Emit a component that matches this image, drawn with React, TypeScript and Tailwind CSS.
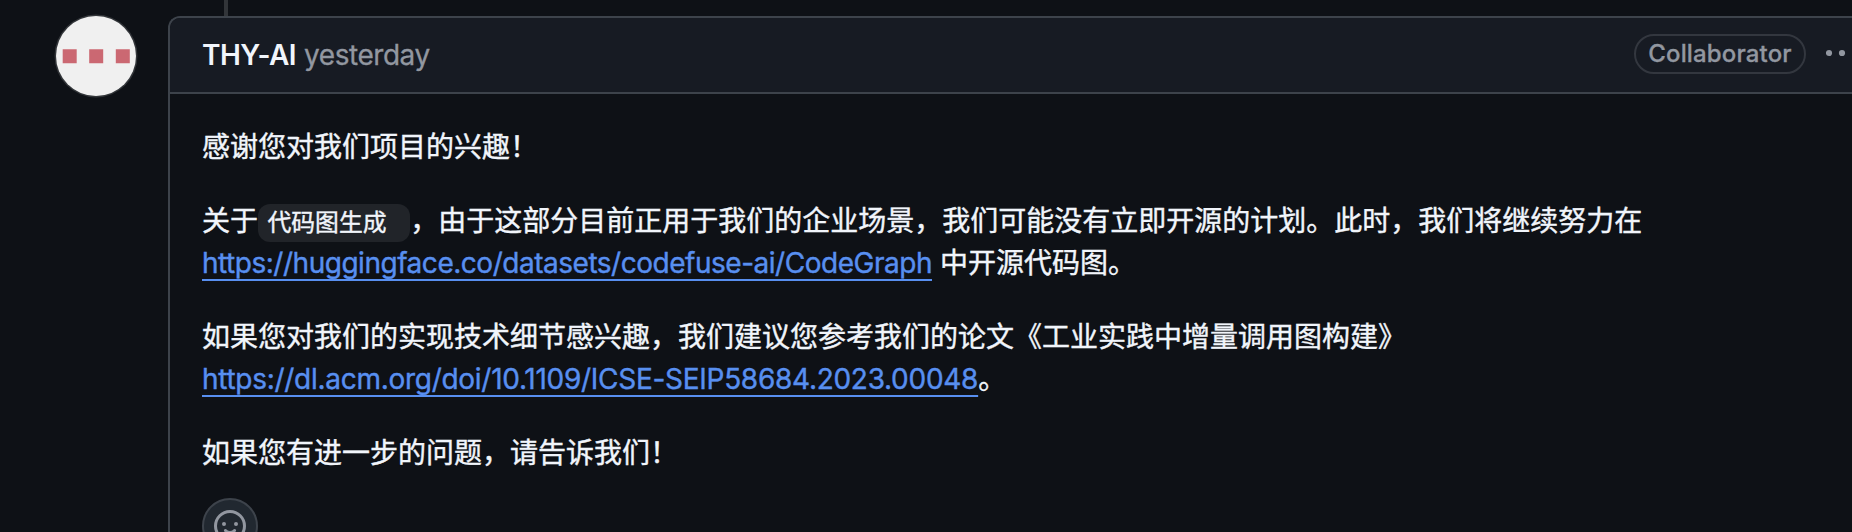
function Avatar() {
  return (
    <svg className="mt-[14px] size-[84px] shrink-0" viewBox="0 0 84 84" aria-hidden="true">
      <circle cx="42" cy="42" r="41.5" fill="#323539" />
      <circle cx="42" cy="42" r="40" fill="#f0f0f0" />
      <path fill="#cb6872" d="M8.7 35.2h14v14h-14zM35.2 35.2h14v14h-14zM61.8 35.2h14v14h-14z" />
    </svg>
  );
}

function Header() {
  return (
    <header className="flex h-[76px] shrink-0 items-center border-b-2 border-[#3d434b] bg-[#171b23] pb-[2px] pl-8">
      <span className="pt-[2px] text-[28px] font-semibold leading-[42px] tracking-[-0.6px] text-[#f1f5fb]">THY-AI</span>
      <span className="ml-2 pt-[2px] text-[28px] leading-[42px] tracking-[-0.45px] text-[#9297a0] [-webkit-text-stroke:0.3px]">yesterday</span>
      <span className="ml-auto flex h-10 w-[172px] items-center justify-center rounded-full border-2 border-[#33373f] text-2xl font-medium leading-none tracking-[0.15px] text-[#9297a0] [-webkit-text-stroke:0.3px]">
        Collaborator
      </span>
      <svg className="mb-[2px] ml-5 size-8 shrink-0" viewBox="0 0 16 16" fill="#9297a0" aria-hidden="true">
        <circle cx="1.5" cy="8" r="1.55" />
        <circle cx="8" cy="8" r="1.55" />
        <circle cx="14.5" cy="8" r="1.5" />
      </svg>
    </header>
  );
}

const link =
  "text-[#588ff0] underline decoration-2 underline-offset-[6px] [text-decoration-skip-ink:none]";

export default function App() {
  return (
    <div lang="zh-CN" className="flex h-[532px] w-[1852px] overflow-hidden bg-[#0e1116] pl-[54px] text-[#f1f5fb] font-[Inter,'Noto_Sans_CJK_SC',sans-serif]">
      <Avatar />
      <div className="ml-[30px] flex w-[1690px] shrink-0 flex-col">
        <div className="ml-14 h-4 w-1 shrink-0 bg-[#323539]" />
        <article className="flex h-[600px] shrink-0 flex-col overflow-hidden rounded-tl-xl border-l-2 border-t-2 border-[#3d434b]">
          <Header />
          <div className="flex flex-col gap-8 whitespace-nowrap pl-8 pt-8 text-[28px] leading-[42px] [-webkit-text-stroke:0.4px]">
            <p className="h-[42px]">感谢您对我们项目的兴趣！</p>
            <p className="h-[84px]">
              关于
              <code className="whitespace-break-spaces rounded-xl bg-[#212429] px-[9.5px] pb-[4px] pt-[7px] text-[23.8px] leading-none font-['Liberation_Mono','Noto_Sans_CJK_SC',monospace]">
                {"代码图生成 "}
              </code>
              ，由于这部分目前正用于我们的企业场景，我们可能没有立即开源的计划。此时，我们将继续努力在
              <br />
              <a className={`${link} tracking-[-0.477px]`}>https://huggingface.co/datasets/codefuse-ai/CodeGraph</a> 中开源代码图。
            </p>
            <p className="h-[84px]">
              如果您对我们的实现技术细节感兴趣，我们建议您参考我们的论文《工业实践中增量调用图构建》
              <br />
              <a className={`${link} tracking-[-0.28px]`}>https://dl.acm.org/doi/10.1109/ICSE-SEIP58684.2023.00048</a>。
            </p>
            <p className="h-[42px]">如果您有进一步的问题，请告诉我们！</p>
          </div>
          <button className="ml-8 mt-6 flex size-14 shrink-0 items-center justify-center rounded-full border-2 border-[#3d434b] bg-[#212830]">
            <svg className="size-8" viewBox="0 0 16 16" fill="#9297a0" aria-hidden="true">
              <path d="M8 0a8 8 0 1 1 0 16A8 8 0 0 1 8 0ZM1.5 8a6.5 6.5 0 1 0 13 0 6.5 6.5 0 0 0-13 0Zm3.82 1.636a.75.75 0 0 1 1.038.175l.007.009c.103.118.22.222.35.31.264.178.683.37 1.285.37.602 0 1.02-.192 1.285-.371.13-.088.247-.192.35-.31l.007-.008a.75.75 0 0 1 1.222.87l-.022-.015c.02.013.021.015.021.015v.001l-.001.002-.002.003-.005.007-.014.019a2.066 2.066 0 0 1-.184.213c-.16.166-.338.316-.53.445-.63.418-1.37.638-2.127.629-.946 0-1.652-.308-2.126-.63a3.331 3.331 0 0 1-.715-.657l-.014-.02-.005-.006-.002-.003v-.002h-.001l.613-.432-.614.43a.75.75 0 0 1 .183-1.044ZM12 7a1 1 0 1 1-2 0 1 1 0 0 1 2 0ZM5 8a1 1 0 1 1 0-2 1 1 0 0 1 0 2Z" />
            </svg>
          </button>
        </article>
      </div>
    </div>
  );
}
